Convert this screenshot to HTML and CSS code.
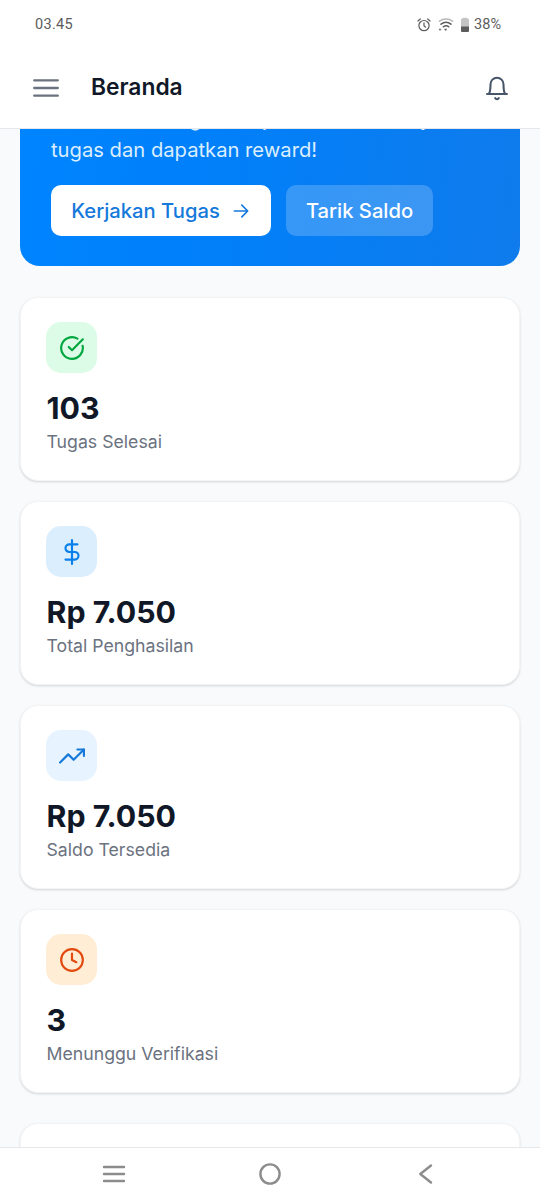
FILE: index.html
```html
<!DOCTYPE html>
<html lang="id">
<head>
<meta charset="utf-8">
<meta name="viewport" content="width=device-width">
<title>Beranda</title>
<link rel="stylesheet" href="styles.css">
</head>
<body>
<div class="screen">
  <div class="status">
    <span class="time">03.45</span>
    <div class="indicators">
      <svg class="alarm" width="14" height="14" viewBox="0 0 14 14" fill="none" stroke="#5c5c5c" stroke-width="1.2" stroke-linecap="round"><circle cx="7" cy="7.6" r="5.1"/><path d="M7 4.8v3l1.6 1.4M1 3l2.3-2M13 3l-2.3-2"/></svg>
      <svg class="wifi" width="16" height="14" viewBox="0 0 16 14" fill="none" stroke="#5c5c5c" stroke-width="1.5" stroke-linecap="round"><path d="M1.5 3.2C5.3.4 10.8.4 14.5 3.2" stroke="#b8b8b8"/><path d="M3 6.2C6 3.8 10 3.8 13 6.2M5.3 8.8c1.800-1.200 3.800-1.200 5.500 0"/><path d="M8.500 11h-2l1 1.500zM2.800 11H1l.9 1.300z" fill="#5c5c5c" stroke-width=".5"/></svg>
      <svg class="battery" width="8" height="16" viewBox="0 0 8 16"><path d="M2 1.500V.8h4v.7h1q1 0 1 1V10H0V2.500q0-1 1-1z" fill="#c4c4c4"/><path d="M0 9.500h8V14q0 1-1 1H1q-1 0-1-1z" fill="#5c5c5c"/></svg>
      <span class="percent">38%</span>
    </div>
  </div>
  <header class="appbar">
    <svg class="menu" width="26" height="20" viewBox="0 0 26 20" fill="none" stroke="#6b7280" stroke-width="2.300" stroke-linecap="round"><path d="M1.200 2.300h23.600M1.200 10h23.600M1.200 17.700h23.600"/></svg>
    <h1 class="title">Beranda</h1>
    <svg class="bell" width="26" height="26" viewBox="0 0 24 24" fill="none" stroke="#475569" stroke-width="1.9" stroke-linecap="round" stroke-linejoin="round"><path d="M2.800 17.500h18.400M4.500 17.300C6 15.300 6 12.500 6 8.500a6 6 0 0 1 12 0c0 4 0 6.800 1.500 8.800"/><path d="M10.300 21.300a1.900 1.900 0 0 0 3.400 0"/></svg>
  </header>
  <main class="content">
    <section class="hero">
      <p class="message"><span class="lead">Selamat datang bekerja dan lebih banyak</span><br>tugas dan dapatkan reward!</p>
      <div class="actions">
        <button class="btn primary">Kerjakan Tugas<svg width="20" height="20" viewBox="0 0 24 24" fill="none" stroke="currentColor" stroke-width="2" stroke-linecap="round" stroke-linejoin="round"><path d="M4 12h16M13 5l7 7-7 7"/></svg></button>
        <button class="btn secondary">Tarik Saldo</button>
      </div>
    </section>
    <section class="stats">
      <article class="card">
        <div class="icon green"><svg viewBox="0 0 24 24"><path d="M21.800 10A10 10 0 1 1 17 3.335"/><path d="m9 11 3 3L22 4"/></svg></div>
        <div class="value">103</div><div class="label">Tugas Selesai</div>
      </article>
      <article class="card">
        <div class="icon blue"><svg viewBox="0 0 24 24"><path d="M12 1v22M17 5H9.500a3.500 3.500 0 0 0 0 7h5a3.500 3.500 0 0 1 0 7H6"/></svg></div>
        <div class="value">Rp 7.050</div><div class="label">Total Penghasilan</div>
      </article>
      <article class="card">
        <div class="icon sky"><svg viewBox="0 0 24 24"><path d="M23 6l-9.500 9.500-5-5L1 18"/><path d="M17 6h6v6"/></svg></div>
        <div class="value">Rp 7.050</div><div class="label">Saldo Tersedia</div>
      </article>
      <article class="card">
        <div class="icon orange"><svg viewBox="0 0 24 24"><circle cx="12" cy="12" r="10"/><path d="M12 6v6l4 2"/></svg></div>
        <div class="value">3</div><div class="label">Menunggu Verifikasi</div>
      </article>
    </section>
    <section class="card next"></section>
  </main>
  <nav class="sysnav">
    <svg width="24" height="24" viewBox="0 0 24 24"><path d="M2 5h20M2 12h20M2 19h20"/></svg>
    <svg width="24" height="24" viewBox="0 0 24 24"><circle cx="12" cy="12" r="9.600"/></svg>
    <svg width="24" height="24" viewBox="0 0 24 24"><path d="M17 3.500 6.300 12 17 20.500"/></svg>
  </nav>
</div>
</body>
</html>
```

FILE: styles.css
```css
* { box-sizing: border-box; }
body { margin: 0; font-family: Inter, "Noto Sans", sans-serif; background: #f9fafb; }
.screen { height: 1200px; display: flex; flex-direction: column; overflow: hidden; }
.status { height: 48px; flex: none; padding: 1px 39px 0 35px; display: flex; align-items: center; justify-content: space-between; background: #fff; font: 400 14.5px/18px Roboto, sans-serif; color: #5c5c5c; }
.time { letter-spacing: .3px; }
.indicators { display: flex; align-items: center; }
.wifi { margin-left: 7px; }
.battery { margin-left: 7px; }
.percent { margin-left: 5px; }
.appbar { height: 81px; flex: none; display: flex; align-items: center; padding: 0 30px 0 33px; background: #fff; border-bottom: 1px solid #e5e7eb; }
.title { margin: -2px auto 0 32px; font-size: 22.8px; line-height: 32px; font-weight: 600; color: #101828; }
.content { flex: 1; min-height: 0; overflow: hidden; padding: 0 20px; display: flex; flex-direction: column; background: #f9fafb; }
.hero { height: 137px; flex: none; display: flex; flex-direction: column; justify-content: flex-end; overflow: hidden; padding: 0 31px 30px; border-radius: 0 0 20px 20px; background: linear-gradient(95deg, #0084ff, #0080fa 35%, #0f7bec); }
.message { margin: 0 0 20px; white-space: nowrap; font-size: 20.2px; line-height: 31px; color: #dbeefe; }
.lead { word-spacing: 2px; }
.actions { display: flex; gap: 15px; }
.btn { height: 51px; padding: 0; border: 0; border-radius: 10px; display: flex; align-items: center; justify-content: center; font: 500 20.2px/29px Inter, sans-serif; }
.primary { width: 220px; gap: 11px; color: #1479db; background: #fff; }
.secondary { width: 147px; color: #fff; background: rgba(255, 255, 255, .2); }
.stats { margin-top: 31px; display: flex; flex-direction: column; gap: 20px; }
.card { height: 184px; flex: none; padding: 24px 25px; background: #fff; border: 1px solid #f3f4f6; border-radius: 18px; box-shadow: 0 1px 3px rgba(0, 0, 0, .08), 0 1px 2px rgba(0, 0, 0, .08); }
.icon { width: 51px; height: 51px; border-radius: 15px; display: flex; align-items: center; justify-content: center; }
.icon svg { width: 26px; height: 26px; fill: none; stroke: currentColor; stroke-width: 2; stroke-linecap: round; stroke-linejoin: round; }
.green { color: #00a63e; background: #dcfce7; }
.blue { color: #0880ec; background: #dbeefe; }
.sky { color: #1479db; background: #e7f4ff; }
.orange { color: #e24a10; background: #ffedd5; }
.value { margin-top: 15px; padding-left: .5px; font-size: 30.3px; line-height: 40px; font-weight: 700; color: #101828; }
.label { margin-top: 1px; padding-left: .5px; font-size: 17.7px; line-height: 26px; color: #6b7280; }
.next { margin-top: 30px; }
.sysnav { height: 53px; flex: none; padding-right: 1px; display: grid; grid-template-columns: repeat(3, 24px); column-gap: 132px; justify-content: center; align-items: center; background: #fff; border-top: 1px solid #e5e7eb; }
.sysnav svg { fill: none; stroke: #8c8c8c; stroke-width: 2.400; stroke-linecap: round; stroke-linejoin: round; }
```
